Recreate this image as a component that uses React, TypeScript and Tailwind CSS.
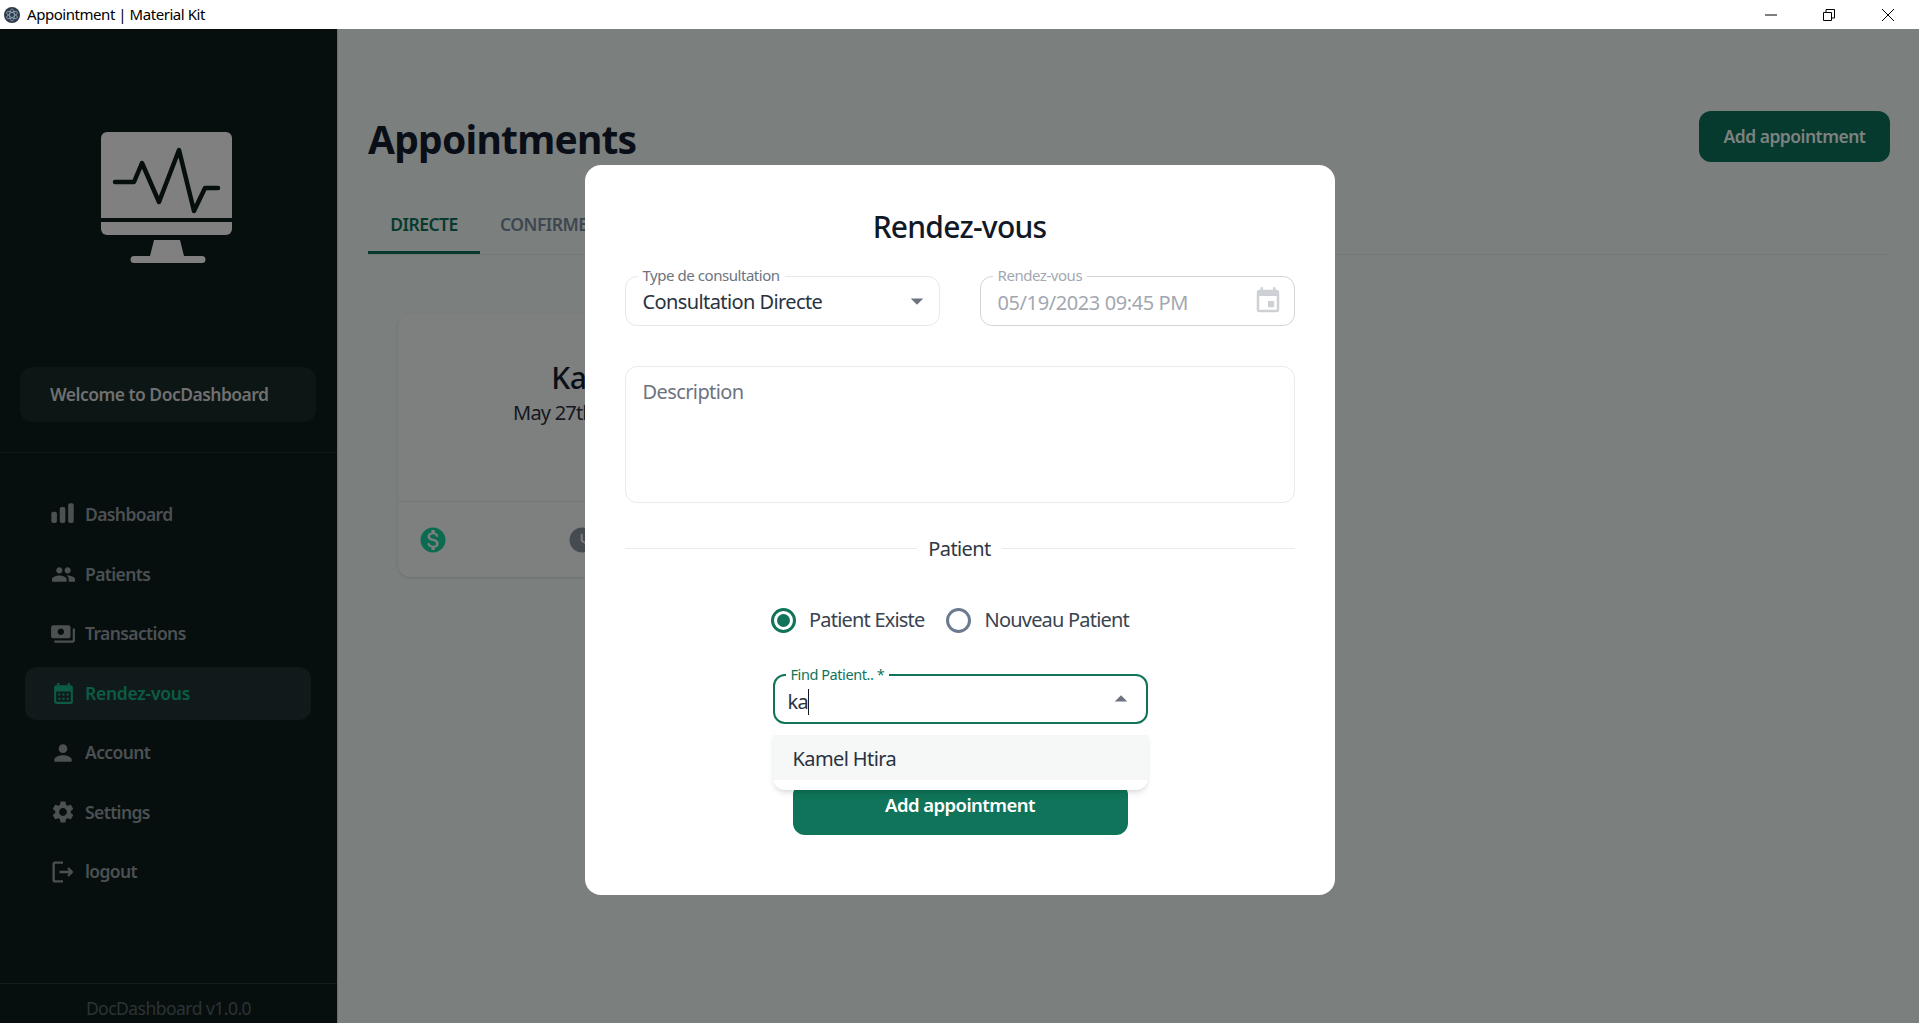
import React from 'react';
import {
  MdPeople,
  MdPayments,
  MdCalendarMonth,
  MdPerson,
  MdSettings,
  MdOutlineLogout,
  MdMonetizationOn,
  MdWatchLater,
  MdArrowDropDown,
  MdArrowDropUp,
  MdEvent,
} from 'react-icons/md';

function BarsIcon({ size }: { size: number }) {
  return (
    <svg width={size} height={size} viewBox="0 0 30 30" fill="currentColor">
      <rect x="2.5" y="12" width="6" height="12" rx="2" />
      <rect x="11.5" y="7" width="6" height="17" rx="2" />
      <rect x="20.5" y="3" width="6" height="21" rx="2" />
    </svg>
  );
}

const navItems = [
  { label: 'Dashboard', icon: BarsIcon, size: 31 },
  { label: 'Patients', icon: MdPeople, size: 25 },
  { label: 'Transactions', icon: MdPayments, size: 26 },
  { label: 'Rendez-vous', icon: MdCalendarMonth, size: 25, active: true },
  { label: 'Account', icon: MdPerson, size: 26 },
  { label: 'Settings', icon: MdSettings, size: 26 },
  { label: 'logout', icon: MdOutlineLogout, size: 28 },
];

function MonitorLogo() {
  return (
    <svg width="131" height="131" viewBox="0 0 131 131" fill="#808080">
      <path d="M6 0h119a6 6 0 0 1 6 6v80H0V6a6 6 0 0 1 6-6z" />
      <path d="M0 90h131v7a6 6 0 0 1-6 6H6a6 6 0 0 1-6-6z" />
      <path d="M53 108h26l4 16h18a3.500 3.500 0 0 1 0 7H33a3.500 3.500 0 0 1 0-7h16z" />
      <path
        d="M14 50h19l8-19 17 39 20-52 15 61 11-23h13"
        fill="none"
        stroke="#060f0e"
        strokeWidth="4.500"
        strokeLinecap="round"
        strokeLinejoin="round"
      />
    </svg>
  );
}

function Sidebar() {
  return (
    <aside className="flex flex-col w-[338px] shrink-0 h-full bg-[#060f0e] border-r border-[#6b6f6d]">
      <div className="flex justify-center pt-[103px] pr-[5px]">
        <MonitorLogo />
      </div>
      <div className="mx-5 mt-[104px] h-[55px] w-[296px] flex items-center pl-[30px] rounded-xl bg-[#0c1615] text-[#707070] text-[17.500px] font-semibold tracking-[-0.03em]">
        Welcome to DocDashboard
      </div>
      <div className="mt-[30px] h-px bg-[#0e1817]" />
      <nav className="flex flex-col gap-[6.500px] pl-[25px] pr-[26px] pt-[35px] flex-1">
        {navItems.map((item) => {
          const Icon = item.icon;
          return (
            <div
              key={item.label}
              className={
                item.active
                  ? 'flex items-center h-[53px] rounded-xl pl-[24px] bg-[#101a1a] text-[#0c5c45]'
                  : 'flex items-center h-[53px] rounded-xl pl-[24px] text-[#4c5053]'
              }
            >
              <span className="w-[28px] flex justify-center">
                <Icon size={item.size} />
              </span>
              <span
                className={
                  item.active
                    ? 'ml-[8px] text-[17.500px] font-semibold tracking-[-0.015em]'
                    : 'ml-[8px] text-[17.500px] font-semibold tracking-[-0.035em]'
                }
              >
                {item.label}
              </span>
            </div>
          );
        })}
      </nav>
      <div className="h-[40px] pt-[10px] border-t border-[#141d1e] flex items-center justify-center text-[#2c3336] text-[17.500px] tracking-[-0.03em]">
        DocDashboard v1.0.0
      </div>
    </aside>
  );
}

function Background() {
  return (
    <main className="flex-1 min-w-0 h-full bg-[#7b7f7d] pl-[30px] pr-[29px]">
      <div className="flex items-start justify-between pt-[82px] h-[170px]">
        <h1 className="mt-[3px] text-[39px] leading-[50px] font-bold text-[#0a0f17] tracking-[-0.02em]">Appointments</h1>
        <button className="w-[191px] h-[51px] rounded-xl bg-[#063a2e] text-[#7d8280] text-[17.500px] font-semibold tracking-[-0.03em]">
          Add appointment
        </button>
      </div>
      <div className="flex h-[57px] border-b border-[#747876] -mt-[1px]">
        <div className="w-[112px] flex items-center justify-center border-b-[3px] border-[#063a2e] text-[#063a2e] text-[17.500px] font-semibold tracking-[-0.03em]">
          DIRECTE
        </div>
        <div className="ml-[20px] flex items-center border-b-[3px] border-transparent text-[#3d4750] text-[17.500px] font-semibold tracking-[-0.03em]">
          CONFIRMEE
        </div>
      </div>
      <div className="mt-[59px] ml-[30px] w-[469px] h-[263px] rounded-xl bg-[#7e7f7f] shadow-sm flex flex-col">
        <div className="flex-1 flex flex-col items-center pt-[44px] border-b border-[#757776]">
          <div className="text-[30px] leading-[40px] font-medium text-[#0a0f17] tracking-[-0.02em]">Kamel Htira</div>
          <div className="text-[20px] leading-[30px] text-[#14181f] tracking-[-0.04em]">May 27th, 2023 at 10:00 AM</div>
        </div>
        <div className="h-[75px] flex items-center px-[20px] gap-[119px]">
          <MdMonetizationOn size={30} className="text-[#0a6b50]" />
          <MdWatchLater size={30} className="text-[#464b52]" />
        </div>
      </div>
    </main>
  );
}

function OutlinedField({
  label,
  className,
  labelClass,
  children,
}: {
  label: string;
  className: string;
  labelClass: string;
  children: React.ReactNode;
}) {
  return (
    <div className={`relative h-[50px] rounded-xl flex items-center pl-[17px] ${className}`}>
      <span className={`absolute left-[12px] -top-[11px] px-[5px] bg-white text-[15px] leading-[18px] tracking-[-0.03em] ${labelClass}`}>
        {label}
      </span>
      {children}
    </div>
  );
}

function Modal() {
  return (
    <div className="absolute inset-0 flex items-center justify-center pt-[8px]">
      <div className="w-[750px] h-[730px] rounded-2xl bg-white px-10 pt-[42px] text-[#111927]">
        <h2 className="text-center text-[30px] leading-[40px] font-medium tracking-[-0.025em]">Rendez-vous</h2>

        <div className="mt-[29px] grid grid-cols-2 gap-[40px]">
          <OutlinedField label="Type de consultation" className="border border-[#e6e8ee] pr-[7px]" labelClass="text-[#6c737f]">
            <span className="flex-1 pt-[2px] text-[20px] text-[#2a3240] tracking-[-0.03em]">Consultation Directe</span>
            <MdArrowDropDown size={30} className="text-[#6c737f]" />
          </OutlinedField>
          <OutlinedField label="Rendez-vous" className="border border-[#d2d4da] pr-[11px]" labelClass="text-[#a3a8b0]">
            <span className="flex-1 pt-[4px] text-[20px] text-[#a3a8b0] tracking-[-0.02em]">05/19/2023 09:45 PM</span>
            <MdEvent size={30} className="text-[#cdd0d4]" />
          </OutlinedField>
        </div>

        <div className="mt-[40px] h-[137px] rounded-xl border border-[#e9eaf0] pl-[17px] pt-[10px] text-[20px] leading-[30px] text-[#6c737f] tracking-[-0.03em]">
          Description
        </div>

        <div className="mt-[30px] flex items-center gap-[11px]">
          <div className="flex-1 h-px bg-[#e9eaf0]" />
          <span className="pt-[1px] text-[20px] leading-[30px] text-[#2f3746] tracking-[-0.03em]">Patient</span>
          <div className="flex-1 h-px bg-[#e9eaf0]" />
        </div>

        <div className="mt-[41px] h-[30px] flex items-center justify-center text-[20px] text-[#3a4350] tracking-[-0.04em] pr-[19px]">
          <span className="w-[25px] h-[25px] rounded-full border-[3px] border-[#0f7459] flex items-center justify-center">
            <span className="w-[13px] h-[13px] rounded-full bg-[#0f7459]" />
          </span>
          <span className="ml-[13px]">Patient Existe</span>
          <span className="ml-[21px] w-[25px] h-[25px] rounded-full border-[3px] border-[#6c7a90]" />
          <span className="ml-[14px]">Nouveau Patient</span>
        </div>

        <div className="relative mt-[39px] ml-[148px] mr-[147px]">
          <div className="relative h-[50px] rounded-xl border-2 border-[#0f7459] flex items-center pl-[13px] pr-[10px]">
            <span className="absolute left-[11px] -top-[11px] px-[5px] bg-white text-[14.500px] leading-[18px] text-[#0f7459] tracking-[-0.03em]">
              Find Patient.. *
            </span>
            <span className="pt-[6px] text-[20px] text-[#2a3240] tracking-[-0.03em]">ka</span>
            <span className="w-px h-[26px] mt-[5px] bg-[#111927]" />
            <MdArrowDropUp size={30} className="ml-auto text-[#6c737f]" />
          </div>
          <div className="absolute left-0 right-0 top-[53px] h-[63px] rounded-xl bg-white shadow-md py-[8px] z-10">
            <div className="h-[45px] pt-[2px] bg-[#f6f7f7] flex items-center pl-[20px] text-[20px] text-[#2a3240] tracking-[-0.03em]">
              Kamel Htira
            </div>
          </div>
        </div>

        <button className="block mt-[59px] ml-[168px] w-[335px] h-[52px] pb-[8px] rounded-xl bg-[#0f7459] text-white text-[18.500px] font-semibold tracking-[-0.03em]">
          Add appointment
        </button>
      </div>
    </div>
  );
}

function TitleBar() {
  return (
    <div className="h-[29px] shrink-0 bg-white flex items-center text-[15px] text-black">
      <svg width="16" height="16" viewBox="0 0 16 16" className="ml-[4px]">
        <circle cx="8" cy="8" r="8" fill="#2f3a4a" />
        <g fill="none" stroke="#9fb4c4" strokeWidth="0.700">
          <ellipse cx="8" cy="8" rx="6" ry="2.400" transform="rotate(30 8 8)" />
          <ellipse cx="8" cy="8" rx="6" ry="2.400" transform="rotate(90 8 8)" />
          <ellipse cx="8" cy="8" rx="6" ry="2.400" transform="rotate(150 8 8)" />
        </g>
      </svg>
      <span className="ml-[7px] tracking-[-0.03em]">Appointment | Material Kit</span>
      <div className="ml-auto flex items-center">
        <svg width="12" height="12" viewBox="0 0 12 12" className="mr-[46px]">
          <path d="M0 6h12" stroke="#000" strokeWidth="1" />
        </svg>
        <svg width="12" height="12" viewBox="0 0 12 12" className="mr-[47px]">
          <path d="M.5 3.500h8v8h-8zM3 3.500V.5h8.500V9H8.500" fill="none" stroke="#000" strokeWidth="1" />
        </svg>
        <svg width="12" height="12" viewBox="0 0 12 12" className="mr-[25px]">
          <path d="M0 0l12 12M12 0L0 12" stroke="#000" strokeWidth="1" />
        </svg>
      </div>
    </div>
  );
}

export default function App() {
  return (
    <div className="flex flex-col w-full h-screen overflow-hidden font-['Noto_Sans',sans-serif]">
      <TitleBar />
      <div className="relative flex flex-1 min-h-0">
        <Sidebar />
        <Background />
        <Modal />
      </div>
    </div>
  );
}
